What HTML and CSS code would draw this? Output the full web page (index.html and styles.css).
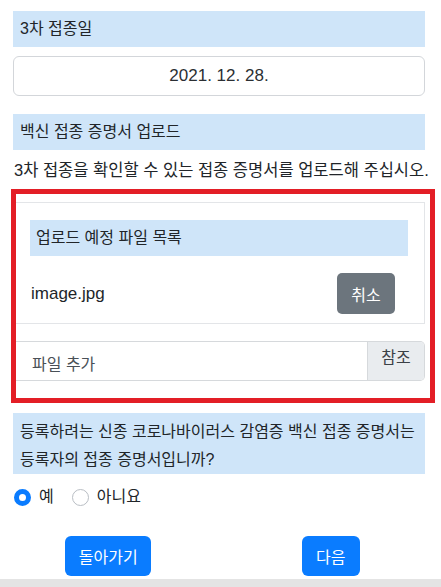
FILE: index.html
```html
<!DOCTYPE html>
<html lang="ko">
<head>
<meta charset="utf-8">
<link rel="stylesheet" href="styles.css">
</head>
<body>
<div class="page">
  <div class="label">3차 접종일</div>
  <div class="date-input">2021. 12. 28.</div>

  <div class="label label-gap">백신 접종 증명서 업로드</div>
  <p class="instruction">3차 접종을 확인할 수 있는 접종 증명서를 업로드해 주십시오.</p>

  <div class="card">
    <div class="card-head">업로드 예정 파일 목록</div>
    <div class="file-row">
      <span class="file-name">image.jpg</span>
      <button class="btn-cancel">취소</button>
    </div>
  </div>

  <div class="file-input">
    <div class="file-placeholder">파일 추가</div>
    <div class="file-browse">참조</div>
  </div>

  <div class="question">등록하려는 신종 코로나바이러스 감염증 백신 접종 증명서는<br>등록자의 접종 증명서입니까?</div>

  <div class="radios">
    <label class="radio-item"><span class="radio checked"></span><span>예</span></label>
    <label class="radio-item"><span class="radio"></span><span>아니요</span></label>
  </div>

  <div class="actions">
    <div class="action-col"><button class="btn-primary btn-back">돌아가기</button></div>
    <div class="action-col"><button class="btn-primary btn-next">다음</button></div>
  </div>
</div>
<div class="bottom-bar"></div>
<div class="highlight"></div>
</body>
</html>
```
FILE: styles.css
```css
* { box-sizing: border-box; }

html, body {
  margin: 0;
  padding: 0;
  background: #ffffff;
}

body {
  font-family: "Liberation Sans", "Noto Sans CJK KR", sans-serif;
  color: #212529;
  font-size: 16px;
  width: 441px;
  height: 587px;
  overflow: hidden;
  position: relative;
}

.page {
  padding: 11px 16px 0 13px;
}

.label {
  background: #cfe5f9;
  height: 36px;
  line-height: 36px;
  padding-left: 7px;
  font-size: 16px;
}

.label-gap {
  margin-top: 18px;
}

.date-input {
  margin-top: 9px;
  height: 40px;
  border: 1px solid #d3d6da;
  border-radius: 6px;
  text-align: center;
  line-height: 38px;
  font-size: 17px;
  color: #2b2f33;
}

.instruction {
  margin: 5px 0 0;
  height: 30px;
  line-height: 30px;
  font-size: 16.5px;
  white-space: nowrap;
  padding-left: 1px;
}

.card {
  margin-top: 17px;
  border: 1px solid #e3e5e8;
  padding: 17px 16px 9px;
}

.card-head {
  background: #cfe5f9;
  height: 36px;
  line-height: 36px;
  padding-left: 6px;
  font-size: 16px;
}

.file-row {
  margin-top: 17px;
  display: flex;
  align-items: center;
  justify-content: space-between;
  padding-right: 13px;
  padding-left: 1px;
}

.file-name {
  font-size: 17px;
  line-height: 41px;
}

.btn-cancel {
  width: 58px;
  height: 41px;
  border: none;
  border-radius: 5px;
  background: #6c757d;
  color: #ffffff;
  font-family: inherit;
  font-size: 16px;
  padding: 0;
}

.file-input {
  margin-top: 17px;
  height: 40px;
  display: flex;
  border-top: 1px solid #d6d9dc;
  border-right: 1px solid #d6d9dc;
  border-bottom: 1px solid #d6d9dc;
  border-radius: 0 5px 5px 0;
}

.file-placeholder {
  flex: 1 1 auto;
  padding-top: 8px;
  padding-left: 19px;
  line-height: 30px;
  font-size: 16px;
  color: #495057;
}

.file-browse {
  flex: 0 0 57px;
  background: #e9ecef;
  border-left: 1px solid #d6d9dc;
  text-align: center;
  line-height: 30px;
  padding-top: 1px;
  font-size: 16px;
  color: #3b4046;
  border-radius: 0 4px 4px 0;
}

.question {
  margin-top: 32px;
  background: #cfe5f9;
  height: 61px;
  padding: 5px 7px 0;
  line-height: 28px;
  font-size: 16px;
  white-space: nowrap;
}

.radios {
  margin-top: 11px;
  height: 24px;
  display: flex;
  align-items: center;
  gap: 17px;
}

.radio-item {
  display: flex;
  align-items: center;
  gap: 8px;
  font-size: 16px;
  line-height: 24px;
}

.radio {
  width: 17px;
  height: 17px;
  border-radius: 50%;
  border: 1px solid #b9bec4;
  background: #ffffff;
  display: inline-block;
  margin-left: 1px;
}

.radio.checked {
  border: 5px solid #0a7cff;
  background: #ffffff;
}

.actions {
  margin: 27px -16px 0 -13px;
  display: grid;
  grid-template-columns: 1fr 1fr;
}

.action-col {
  display: flex;
  justify-content: center;
}

.btn-primary {
  height: 40px;
  border: none;
  border-radius: 6px;
  background: #0a7cff;
  color: #ffffff;
  font-family: inherit;
  font-size: 16px;
  padding: 0;
}

.btn-back {
  width: 86px;
  margin-left: -4px;
}

.btn-next {
  width: 58px;
}

.bottom-bar {
  position: absolute;
  left: 0;
  right: 0;
  bottom: 0;
  height: 8px;
  background: #e4e4e4;
}

.highlight {
  position: absolute;
  left: 11px;
  top: 189px;
  width: 424px;
  height: 214px;
  border: 5px solid #e31e26;
  pointer-events: none;
}
```
